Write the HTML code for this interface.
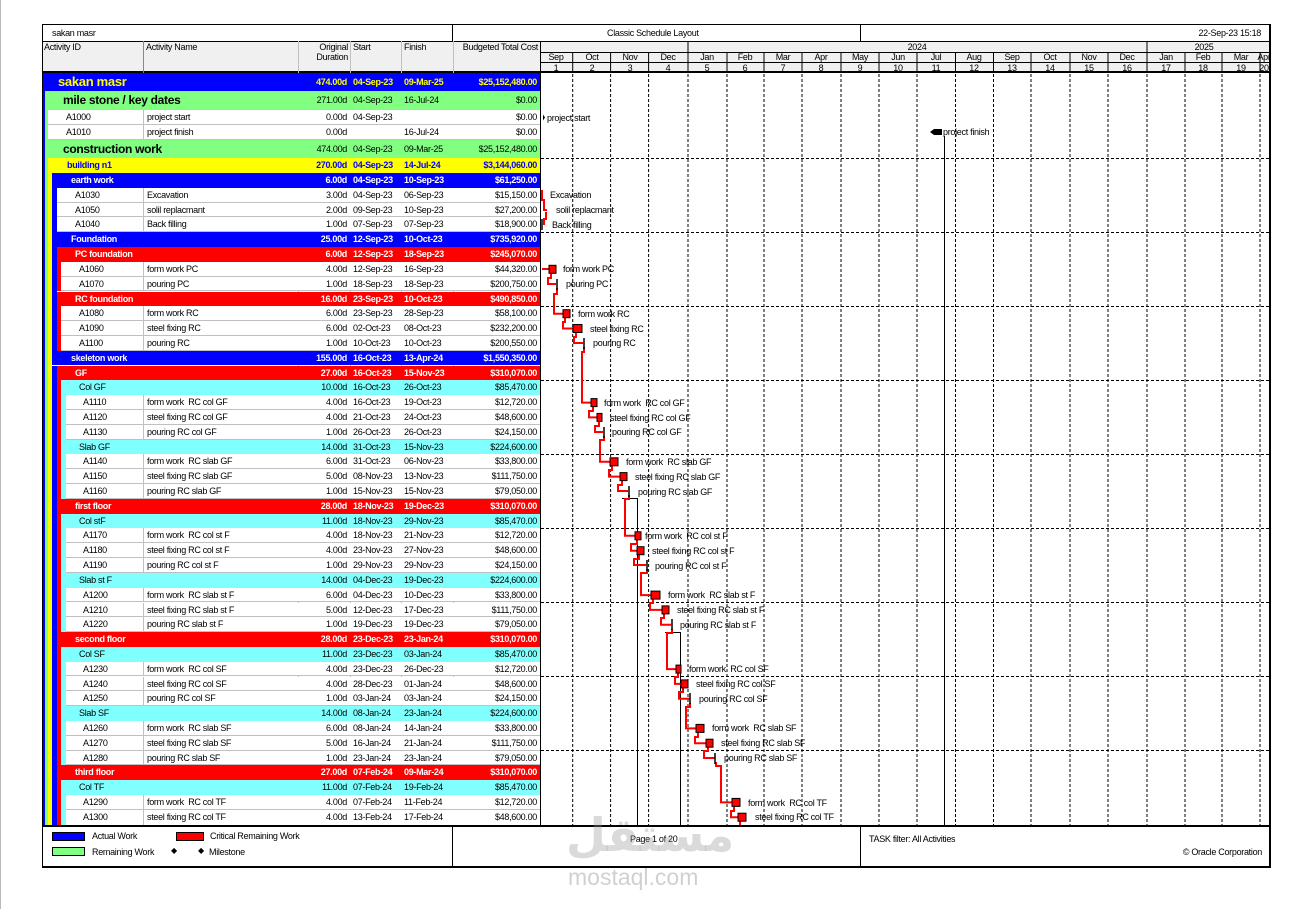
<!DOCTYPE html>
<html><head><meta charset="utf-8">
<style>
body{margin:0;width:1297px;height:909px;position:relative;background:#fff;font-family:"Liberation Sans",Arial,sans-serif;font-size:9px;letter-spacing:-.3px;overflow:hidden;color:#000}
.a{position:absolute;white-space:nowrap}
.r{position:absolute;left:0;width:540px;height:14.8px;line-height:14.8px}
.r>*{position:absolute;top:0;white-space:nowrap}
.r>i{right:0;height:100%;box-sizing:border-box}
.du{right:193px}.st{left:353px}.fi{left:404px}.co{right:3px}
.nm{left:143px;padding-left:3px;border-left:1px solid #c0c0c0;height:100%;box-sizing:border-box}
.w>i{background:#fff;border-bottom:1px solid #c0c0c0}
.L1>i{background:#0000ff}.L1{color:#ffff00;font-weight:bold}
.L2>i{background:#80ff80}
.L3>i{background:#ffff00}.L3{color:#0000ff;font-weight:bold}
.L4>i{background:#0000ff}.L4{color:#fff;font-weight:bold}
.L5>i{background:#ff0000}.L5{color:#fff;font-weight:bold}
.L6>i{background:#80ffff}
.sv{position:absolute;left:0;top:0}
.v{position:absolute;width:1px;background:#c0c0c0}
</style></head><body>
<!-- frame -->
<div class="a" style="left:0;top:0;width:1px;height:909px;background:#bbb"></div>
<div class="a" style="left:42px;top:24px;width:1226px;height:841px;border:1px solid #000;border-width:1px 2px 2px 1px"></div>
<div class="a" style="left:42px;top:24px;width:1228px;height:1px;background:#000"></div>
<div class="a" style="left:452px;top:24px;width:1px;height:17px;background:#000"></div>
<div class="a" style="left:860px;top:24px;width:1px;height:17px;background:#000"></div>
<div class="a" style="left:52px;top:28px">sakan masr</div>
<div class="a" style="left:607px;top:28px">Classic Schedule Layout</div>
<div class="a" style="right:36px;top:28px">22-Sep-23 15:18</div>
<!-- header -->
<div class="a" style="left:43px;top:41px;width:1226px;height:32px;background:#f0f0f0;border-top:1px solid #000;border-bottom:2px solid #000;box-sizing:border-box"></div>
<div class="a" style="left:44px;top:42px">Activity ID</div>
<div class="a" style="left:146px;top:42px">Activity Name</div>
<div class="a" style="right:949px;top:42px;text-align:right;line-height:10px">Original<br>Duration</div>
<div class="a" style="left:353px;top:42px">Start</div>
<div class="a" style="left:404px;top:42px">Finish</div>
<div class="a" style="right:759px;top:42px">Budgeted Total Cost</div>
<div class="v" style="left:143px;top:41px;height:32px;background:#888"></div>
<div class="v" style="left:298px;top:41px;height:785px"></div>
<div class="v" style="left:350px;top:41px;height:785px"></div>
<div class="v" style="left:401px;top:41px;height:785px"></div>
<div class="v" style="left:453px;top:41px;height:785px"></div>

<!-- rows -->
<div class="r L1" style="top:73px;height:18px;line-height:18px"><i style="left:43px"></i><span style="left:58px;font-size:13px">sakan masr</span><span class="du">474.00d</span><span class="st">04-Sep-23</span><span class="fi">09-Mar-25</span><span class="co">$25,152,480.00</span></div>
<div class="r L2" style="top:91px;height:19px;line-height:19px"><i style="left:45px"></i><span style="left:63px;font-size:12px;font-weight:bold">mile stone / key dates</span><span class="du">271.00d</span><span class="st">04-Sep-23</span><span class="fi">16-Jul-24</span><span class="co">$0.00</span></div>
<div class="r w" style="top:110px"><i style="left:48px"></i><span style="left:66px">A1000</span><span class="nm">project start</span><span class="du">0.00d</span><span class="st">04-Sep-23</span><span class="co">$0.00</span></div>
<div class="r w" style="top:125px"><i style="left:48px"></i><span style="left:66px">A1010</span><span class="nm">project finish</span><span class="du">0.00d</span><span class="fi">16-Jul-24</span><span class="co">$0.00</span></div>
<div class="r L2" style="top:140px;height:18px;line-height:18px"><i style="left:45px"></i><span style="left:63px;font-size:12px;font-weight:bold">construction work</span><span class="du">474.00d</span><span class="st">04-Sep-23</span><span class="fi">09-Mar-25</span><span class="co">$25,152,480.00</span></div>
<div class="r L3" style="top:158px"><i style="left:48px"></i><span style="left:67px">building n1</span><span class="du">270.00d</span><span class="st">04-Sep-23</span><span class="fi">14-Jul-24</span><span class="co">$3,144,060.00</span></div>

<div class="r L4" style="top:173px"><i style="left:52px"></i><span style="left:71px">earth work</span><span class="du">6.00d</span><span class="st">04-Sep-23</span><span class="fi">10-Sep-23</span><span class="co">$61,250.00</span></div>
<div class="r w" style="top:187.8px"><i style="left:57px"></i><span style="left:75px">A1030</span><span class="nm">Excavation</span><span class="du">3.00d</span><span class="st">04-Sep-23</span><span class="fi">06-Sep-23</span><span class="co">$15,150.00</span></div>
<div class="r w" style="top:202.6px"><i style="left:57px"></i><span style="left:75px">A1050</span><span class="nm">solil replacmant</span><span class="du">2.00d</span><span class="st">09-Sep-23</span><span class="fi">10-Sep-23</span><span class="co">$27,200.00</span></div>
<div class="r w" style="top:217.4px"><i style="left:57px"></i><span style="left:75px">A1040</span><span class="nm">Back filling</span><span class="du">1.00d</span><span class="st">07-Sep-23</span><span class="fi">07-Sep-23</span><span class="co">$18,900.00</span></div>
<div class="r L4" style="top:232.2px"><i style="left:52px"></i><span style="left:71px">Foundation</span><span class="du">25.00d</span><span class="st">12-Sep-23</span><span class="fi">10-Oct-23</span><span class="co">$735,920.00</span></div>
<div class="r L5" style="top:247.1px"><i style="left:57px"></i><span style="left:75px">PC foundation</span><span class="du">6.00d</span><span class="st">12-Sep-23</span><span class="fi">18-Sep-23</span><span class="co">$245,070.00</span></div>
<div class="r w" style="top:261.9px"><i style="left:61px"></i><span style="left:79px">A1060</span><span class="nm">form work PC</span><span class="du">4.00d</span><span class="st">12-Sep-23</span><span class="fi">16-Sep-23</span><span class="co">$44,320.00</span></div>
<div class="r w" style="top:276.7px"><i style="left:61px"></i><span style="left:79px">A1070</span><span class="nm">pouring PC</span><span class="du">1.00d</span><span class="st">18-Sep-23</span><span class="fi">18-Sep-23</span><span class="co">$200,750.00</span></div>
<div class="r L5" style="top:291.5px"><i style="left:57px"></i><span style="left:75px">RC foundation</span><span class="du">16.00d</span><span class="st">23-Sep-23</span><span class="fi">10-Oct-23</span><span class="co">$490,850.00</span></div>
<div class="r w" style="top:306.3px"><i style="left:61px"></i><span style="left:79px">A1080</span><span class="nm">form work RC</span><span class="du">6.00d</span><span class="st">23-Sep-23</span><span class="fi">28-Sep-23</span><span class="co">$58,100.00</span></div>
<div class="r w" style="top:321.1px"><i style="left:61px"></i><span style="left:79px">A1090</span><span class="nm">steel fixing RC</span><span class="du">6.00d</span><span class="st">02-Oct-23</span><span class="fi">08-Oct-23</span><span class="co">$232,200.00</span></div>
<div class="r w" style="top:335.9px"><i style="left:61px"></i><span style="left:79px">A1100</span><span class="nm">pouring RC</span><span class="du">1.00d</span><span class="st">10-Oct-23</span><span class="fi">10-Oct-23</span><span class="co">$200,550.00</span></div>
<div class="r L4" style="top:350.7px"><i style="left:52px"></i><span style="left:71px">skeleton work</span><span class="du">155.00d</span><span class="st">16-Oct-23</span><span class="fi">13-Apr-24</span><span class="co">$1,550,350.00</span></div>
<div class="r L5" style="top:365.5px"><i style="left:57px"></i><span style="left:75px">GF</span><span class="du">27.00d</span><span class="st">16-Oct-23</span><span class="fi">15-Nov-23</span><span class="co">$310,070.00</span></div>
<div class="r L6" style="top:380.3px"><i style="left:61px"></i><span style="left:79px">Col GF</span><span class="du">10.00d</span><span class="st">16-Oct-23</span><span class="fi">26-Oct-23</span><span class="co">$85,470.00</span></div>
<div class="r w" style="top:395.2px"><i style="left:66px"></i><span style="left:83px">A1110</span><span class="nm">form work&nbsp; RC col GF</span><span class="du">4.00d</span><span class="st">16-Oct-23</span><span class="fi">19-Oct-23</span><span class="co">$12,720.00</span></div>
<div class="r w" style="top:410px"><i style="left:66px"></i><span style="left:83px">A1120</span><span class="nm">steel fixing RC col GF</span><span class="du">4.00d</span><span class="st">21-Oct-23</span><span class="fi">24-Oct-23</span><span class="co">$48,600.00</span></div>
<div class="r w" style="top:424.8px"><i style="left:66px"></i><span style="left:83px">A1130</span><span class="nm">pouring RC col GF</span><span class="du">1.00d</span><span class="st">26-Oct-23</span><span class="fi">26-Oct-23</span><span class="co">$24,150.00</span></div>
<div class="r L6" style="top:439.6px"><i style="left:61px"></i><span style="left:79px">Slab GF</span><span class="du">14.00d</span><span class="st">31-Oct-23</span><span class="fi">15-Nov-23</span><span class="co">$224,600.00</span></div>
<div class="r w" style="top:454.4px"><i style="left:66px"></i><span style="left:83px">A1140</span><span class="nm">form work&nbsp; RC slab GF</span><span class="du">6.00d</span><span class="st">31-Oct-23</span><span class="fi">06-Nov-23</span><span class="co">$33,800.00</span></div>
<div class="r w" style="top:469.2px"><i style="left:66px"></i><span style="left:83px">A1150</span><span class="nm">steel fixing RC slab GF</span><span class="du">5.00d</span><span class="st">08-Nov-23</span><span class="fi">13-Nov-23</span><span class="co">$111,750.00</span></div>
<div class="r w" style="top:484px"><i style="left:66px"></i><span style="left:83px">A1160</span><span class="nm">pouring RC slab GF</span><span class="du">1.00d</span><span class="st">15-Nov-23</span><span class="fi">15-Nov-23</span><span class="co">$79,050.00</span></div>
<div class="r L5" style="top:498.8px"><i style="left:57px"></i><span style="left:75px">first floor</span><span class="du">28.00d</span><span class="st">18-Nov-23</span><span class="fi">19-Dec-23</span><span class="co">$310,070.00</span></div>
<div class="r L6" style="top:513.6px"><i style="left:61px"></i><span style="left:79px">Col stF</span><span class="du">11.00d</span><span class="st">18-Nov-23</span><span class="fi">29-Nov-23</span><span class="co">$85,470.00</span></div>
<div class="r w" style="top:528.4px"><i style="left:66px"></i><span style="left:83px">A1170</span><span class="nm">form work&nbsp; RC col st F</span><span class="du">4.00d</span><span class="st">18-Nov-23</span><span class="fi">21-Nov-23</span><span class="co">$12,720.00</span></div>
<div class="r w" style="top:543.3px"><i style="left:66px"></i><span style="left:83px">A1180</span><span class="nm">steel fixing RC col st F</span><span class="du">4.00d</span><span class="st">23-Nov-23</span><span class="fi">27-Nov-23</span><span class="co">$48,600.00</span></div>
<div class="r w" style="top:558.1px"><i style="left:66px"></i><span style="left:83px">A1190</span><span class="nm">pouring RC col st F</span><span class="du">1.00d</span><span class="st">29-Nov-23</span><span class="fi">29-Nov-23</span><span class="co">$24,150.00</span></div>
<div class="r L6" style="top:572.9px"><i style="left:61px"></i><span style="left:79px">Slab st F</span><span class="du">14.00d</span><span class="st">04-Dec-23</span><span class="fi">19-Dec-23</span><span class="co">$224,600.00</span></div>
<div class="r w" style="top:587.7px"><i style="left:66px"></i><span style="left:83px">A1200</span><span class="nm">form work&nbsp; RC slab st F</span><span class="du">6.00d</span><span class="st">04-Dec-23</span><span class="fi">10-Dec-23</span><span class="co">$33,800.00</span></div>
<div class="r w" style="top:602.5px"><i style="left:66px"></i><span style="left:83px">A1210</span><span class="nm">steel fixing RC slab st F</span><span class="du">5.00d</span><span class="st">12-Dec-23</span><span class="fi">17-Dec-23</span><span class="co">$111,750.00</span></div>
<div class="r w" style="top:617.3px"><i style="left:66px"></i><span style="left:83px">A1220</span><span class="nm">pouring RC slab st F</span><span class="du">1.00d</span><span class="st">19-Dec-23</span><span class="fi">19-Dec-23</span><span class="co">$79,050.00</span></div>
<div class="r L5" style="top:632.1px"><i style="left:57px"></i><span style="left:75px">second floor</span><span class="du">28.00d</span><span class="st">23-Dec-23</span><span class="fi">23-Jan-24</span><span class="co">$310,070.00</span></div>
<div class="r L6" style="top:646.9px"><i style="left:61px"></i><span style="left:79px">Col SF</span><span class="du">11.00d</span><span class="st">23-Dec-23</span><span class="fi">03-Jan-24</span><span class="co">$85,470.00</span></div>
<div class="r w" style="top:661.7px"><i style="left:66px"></i><span style="left:83px">A1230</span><span class="nm">form work&nbsp; RC col SF</span><span class="du">4.00d</span><span class="st">23-Dec-23</span><span class="fi">26-Dec-23</span><span class="co">$12,720.00</span></div>
<div class="r w" style="top:676.5px"><i style="left:66px"></i><span style="left:83px">A1240</span><span class="nm">steel fixing RC col SF</span><span class="du">4.00d</span><span class="st">28-Dec-23</span><span class="fi">01-Jan-24</span><span class="co">$48,600.00</span></div>
<div class="r w" style="top:691.4px"><i style="left:66px"></i><span style="left:83px">A1250</span><span class="nm">pouring RC col SF</span><span class="du">1.00d</span><span class="st">03-Jan-24</span><span class="fi">03-Jan-24</span><span class="co">$24,150.00</span></div>
<div class="r L6" style="top:706.2px"><i style="left:61px"></i><span style="left:79px">Slab SF</span><span class="du">14.00d</span><span class="st">08-Jan-24</span><span class="fi">23-Jan-24</span><span class="co">$224,600.00</span></div>
<div class="r w" style="top:721px"><i style="left:66px"></i><span style="left:83px">A1260</span><span class="nm">form work&nbsp; RC slab SF</span><span class="du">6.00d</span><span class="st">08-Jan-24</span><span class="fi">14-Jan-24</span><span class="co">$33,800.00</span></div>
<div class="r w" style="top:735.8px"><i style="left:66px"></i><span style="left:83px">A1270</span><span class="nm">steel fixing RC slab SF</span><span class="du">5.00d</span><span class="st">16-Jan-24</span><span class="fi">21-Jan-24</span><span class="co">$111,750.00</span></div>
<div class="r w" style="top:750.6px"><i style="left:66px"></i><span style="left:83px">A1280</span><span class="nm">pouring RC slab SF</span><span class="du">1.00d</span><span class="st">23-Jan-24</span><span class="fi">23-Jan-24</span><span class="co">$79,050.00</span></div>
<div class="r L5" style="top:765.4px"><i style="left:57px"></i><span style="left:75px">third floor</span><span class="du">27.00d</span><span class="st">07-Feb-24</span><span class="fi">09-Mar-24</span><span class="co">$310,070.00</span></div>
<div class="r L6" style="top:780.2px"><i style="left:61px"></i><span style="left:79px">Col TF</span><span class="du">11.00d</span><span class="st">07-Feb-24</span><span class="fi">19-Feb-24</span><span class="co">$85,470.00</span></div>
<div class="r w" style="top:795px"><i style="left:66px"></i><span style="left:83px">A1290</span><span class="nm">form work&nbsp; RC col TF</span><span class="du">4.00d</span><span class="st">07-Feb-24</span><span class="fi">11-Feb-24</span><span class="co">$12,720.00</span></div>
<div class="r w" style="top:809.8px;height:16.2px"><i style="left:66px"></i><span style="left:83px">A1300</span><span class="nm">steel fixing RC col TF</span><span class="du">4.00d</span><span class="st">13-Feb-24</span><span class="fi">17-Feb-24</span><span class="co">$48,600.00</span></div>

<!-- stripes -->
<div class="a" style="left:43px;top:91px;width:2px;height:735px;background:#0000ff"></div>
<div class="a" style="left:45px;top:110px;width:3px;height:30px;background:#80ff80"></div>
<div class="a" style="left:45px;top:158px;width:3px;height:668px;background:#80ff80"></div>
<div class="a" style="left:48px;top:173px;width:4px;height:653px;background:#ffff00"></div>
<div class="a" style="left:52px;top:187.8px;width:5px;height:44.4px;background:#0000ff"></div>
<div class="a" style="left:52px;top:247.1px;width:5px;height:103.6px;background:#0000ff"></div>
<div class="a" style="left:52px;top:365.5px;width:5px;height:460.5px;background:#0000ff"></div>
<div class="a" style="left:57px;top:261.9px;width:4px;height:29.6px;background:#f00"></div>
<div class="a" style="left:57px;top:306.3px;width:4px;height:44.4px;background:#f00"></div>
<div class="a" style="left:57px;top:380.3px;width:4px;height:118.5px;background:#f00"></div>
<div class="a" style="left:57px;top:513.6px;width:4px;height:118.5px;background:#f00"></div>
<div class="a" style="left:57px;top:646.9px;width:4px;height:118.5px;background:#f00"></div>
<div class="a" style="left:57px;top:780.2px;width:4px;height:45.8px;background:#f00"></div>
<div class="a" style="left:61px;top:395.2px;width:5px;height:44.4px;background:#80ffff"></div>
<div class="a" style="left:61px;top:454.4px;width:5px;height:44.4px;background:#80ffff"></div>
<div class="a" style="left:61px;top:528.4px;width:5px;height:44.5px;background:#80ffff"></div>
<div class="a" style="left:61px;top:587.7px;width:5px;height:44.4px;background:#80ffff"></div>
<div class="a" style="left:61px;top:661.7px;width:5px;height:44.5px;background:#80ffff"></div>
<div class="a" style="left:61px;top:721px;width:5px;height:44.4px;background:#80ffff"></div>
<div class="a" style="left:61px;top:795px;width:5px;height:31px;background:#80ffff"></div>

<!-- gantt -->
<svg class="sv" width="1297" height="909" viewBox="0 0 1297 909" font-family="Liberation Sans, Arial, sans-serif" font-size="9" letter-spacing="-0.3">
<line x1="540.5" y1="41" x2="540.5" y2="826" stroke="#000"/>
<g stroke="#000" stroke-width="1">
<line x1="540" y1="52.5" x2="1269" y2="52.5"/>
<line x1="540" y1="62.5" x2="1269" y2="62.5"/>
<line x1="688" y1="41" x2="688" y2="73"/><line x1="1147" y1="41" x2="1147" y2="73"/>
<line x1="572.7" y1="52" x2="572.7" y2="73"/><line x1="610.6" y1="52" x2="610.6" y2="73"/><line x1="648.6" y1="52" x2="648.6" y2="73"/><line x1="727" y1="52" x2="727" y2="73"/><line x1="764" y1="52" x2="764" y2="73"/><line x1="802" y1="52" x2="802" y2="73"/><line x1="841" y1="52" x2="841" y2="73"/><line x1="879" y1="52" x2="879" y2="73"/><line x1="917" y1="52" x2="917" y2="73"/><line x1="955.5" y1="52" x2="955.5" y2="73"/><line x1="993.5" y1="52" x2="993.5" y2="73"/><line x1="1031" y1="52" x2="1031" y2="73"/><line x1="1070" y1="52" x2="1070" y2="73"/><line x1="1108" y1="52" x2="1108" y2="73"/><line x1="1185" y1="52" x2="1185" y2="73"/><line x1="1222" y1="52" x2="1222" y2="73"/><line x1="1260" y1="52" x2="1260" y2="73"/>
</g>
<g text-anchor="middle">
<text x="917" y="50">2024</text><text x="1204" y="50">2025</text>
<text x="556" y="60">Sep</text><text x="592" y="60">Oct</text><text x="630" y="60">Nov</text><text x="668" y="60">Dec</text><text x="707" y="60">Jan</text><text x="745" y="60">Feb</text><text x="783" y="60">Mar</text><text x="821" y="60">Apr</text><text x="860" y="60">May</text><text x="898" y="60">Jun</text><text x="936" y="60">Jul</text><text x="974" y="60">Aug</text><text x="1012" y="60">Sep</text><text x="1050" y="60">Oct</text><text x="1089" y="60">Nov</text><text x="1127" y="60">Dec</text><text x="1166" y="60">Jan</text><text x="1203" y="60">Feb</text><text x="1241" y="60">Mar</text><text x="1264" y="60">Apr</text>
<text x="556" y="71">1</text><text x="592" y="71">2</text><text x="630" y="71">3</text><text x="668" y="71">4</text><text x="707" y="71">5</text><text x="745" y="71">6</text><text x="783" y="71">7</text><text x="821" y="71">8</text><text x="860" y="71">9</text><text x="898" y="71">10</text><text x="936" y="71">11</text><text x="974" y="71">12</text><text x="1012" y="71">13</text><text x="1050" y="71">14</text><text x="1089" y="71">15</text><text x="1127" y="71">16</text><text x="1166" y="71">17</text><text x="1203" y="71">18</text><text x="1241" y="71">19</text><text x="1264" y="71">20</text>
</g>
<g stroke="#000" stroke-dasharray="3,2">
<line x1="572.7" y1="74" x2="572.7" y2="826"/><line x1="610.6" y1="74" x2="610.6" y2="826"/><line x1="648.6" y1="74" x2="648.6" y2="826"/><line x1="688" y1="74" x2="688" y2="826"/><line x1="727" y1="74" x2="727" y2="826"/><line x1="764" y1="74" x2="764" y2="826"/><line x1="802" y1="74" x2="802" y2="826"/><line x1="841" y1="74" x2="841" y2="826"/><line x1="879" y1="74" x2="879" y2="826"/><line x1="917" y1="74" x2="917" y2="826"/><line x1="955.5" y1="74" x2="955.5" y2="826"/><line x1="993.5" y1="74" x2="993.5" y2="826"/><line x1="1031" y1="74" x2="1031" y2="826"/><line x1="1070" y1="74" x2="1070" y2="826"/><line x1="1108" y1="74" x2="1108" y2="826"/><line x1="1147" y1="74" x2="1147" y2="826"/><line x1="1185" y1="74" x2="1185" y2="826"/><line x1="1222" y1="74" x2="1222" y2="826"/><line x1="1260" y1="74" x2="1260" y2="826"/>
<line x1="541" y1="158.5" x2="1269" y2="158.5"/><line x1="541" y1="232.5" x2="1269" y2="232.5"/><line x1="541" y1="306.5" x2="1269" y2="306.5"/><line x1="541" y1="380.5" x2="1269" y2="380.5"/><line x1="541" y1="454.5" x2="1269" y2="454.5"/><line x1="541" y1="528.5" x2="1269" y2="528.5"/><line x1="541" y1="602.5" x2="1269" y2="602.5"/><line x1="541" y1="676.5" x2="1269" y2="676.5"/><line x1="541" y1="750.5" x2="1269" y2="750.5"/>
</g>
<!-- black relation lines -->
<g stroke="#000" fill="none" stroke-width="1">
<path d="M944.5,136 V826"/>
<path d="M622,498.5 H637.5 V826"/>
<path d="M665,632.5 H680.5 V826"/>
</g>
<!-- milestones -->
<path d="M543,114.5 l2,3 l-2,3 z" fill="#000"/>
<path d="M930,132 l4,-3 h8 v6 h-8 z" fill="#000"/>
<!-- connectors -->
<g stroke="#f00" stroke-width="2" fill="none">
<path d="M542,190 V200 H544 V210 H547"/>
<path d="M546,212 V219 H544 V224 H545"/>
<path d="M542,269 H549"/>
<path d="M551,273 V278 H548 V284 H556"/>
<path d="M557,288 V294 H554 V313.7 H563"/>
<path d="M565,318 V322 H563 V328.5 H573"/>
<path d="M576,333 V337 H574 V343 H583"/>
<path d="M584,347 V352 H582 V402.6 H591"/>
<path d="M593,407 V411 H589 V417.4 H597"/>
<path d="M599,422 V426 H595 V432 H603"/>
<path d="M604,436 V440 H600 V461.8 H610"/>
<path d="M612,466 V470 H609 V476.6 H620"/>
<path d="M622,481 V485 H618 V491 H628"/>
<path d="M629,495 V499 H625 V535.8 H635"/>
<path d="M637,540 V544 H631 V550.7 H637"/>
<path d="M639,555 V559 H634 V565 H646"/>
<path d="M647,569 V573 H641 V595.1 H651"/>
<path d="M653,599 V603 H650 V609.9 H662"/>
<path d="M664,614 V618 H661 V624.7 H671"/>
<path d="M672,629 V633 H667 V669.1 H676"/>
<path d="M678,673 V677 H675 V683.9 H681"/>
<path d="M683,688 V692 H679 V698.8 H690"/>
<path d="M690,703 V707 H686 V728.4 H696"/>
<path d="M698,733 V737 H695 V743.2 H706"/>
<path d="M708,747 V751 H704 V758 H715"/>
<path d="M716,762 V766 H721 V802.4 H732"/>
<path d="M734,807 V811 H731 V817.2 H738"/>
<path d="M740,821 V826"/>
</g>
<!-- bars -->
<g fill="#f00" stroke="#000" stroke-width="1">
<rect x="549" y="265.3" width="7" height="8"/>
<rect x="563" y="309.7" width="7" height="8"/>
<rect x="573" y="324.5" width="9" height="8"/>
<rect x="591" y="398.6" width="6" height="8"/>
<rect x="597" y="413.4" width="5" height="8"/>
<rect x="610" y="457.8" width="8" height="8"/>
<rect x="620" y="472.6" width="7" height="8"/>
<rect x="635" y="531.8" width="6" height="8"/>
<rect x="637" y="546.7" width="7" height="8"/>
<rect x="651" y="591.1" width="9" height="8"/>
<rect x="662" y="605.9" width="7" height="8"/>
<rect x="676" y="665.1" width="5" height="8"/>
<rect x="681" y="679.9" width="7" height="8"/>
<rect x="696" y="724.4" width="8" height="8"/>
<rect x="706" y="739.2" width="7" height="8"/>
<rect x="732" y="798.4" width="8" height="8"/>
<rect x="738" y="813.2" width="8" height="8"/>
</g>
<g stroke="#000" stroke-width="1.5">
<line x1="542" y1="219" x2="542" y2="230"/>
<line x1="557" y1="279" x2="557" y2="290"/>
<line x1="584" y1="338" x2="584" y2="349"/>
<line x1="604" y1="427" x2="604" y2="438"/>
<line x1="629" y1="486" x2="629" y2="497"/>
<line x1="647" y1="560" x2="647" y2="571"/>
<line x1="672" y1="619" x2="672" y2="630"/>
<line x1="690" y1="693" x2="690" y2="704"/>
<line x1="715" y1="753" x2="715" y2="764"/>
</g>
<g fill="#000">
<text x="547" y="121">project start</text>
<text x="943" y="135">project finish</text>
<text x="550" y="198">Excavation</text>
<text x="556" y="213">solil replacmant</text>
<text x="552" y="228">Back filling</text>
<text x="563" y="272">form work PC</text>
<text x="566" y="287">pouring PC</text>
<text x="578" y="317">form work RC</text>
<text x="590" y="332">steel fixing RC</text>
<text x="593" y="346">pouring RC</text>
<text x="604" y="406">form work&#160; RC col GF</text>
<text x="610" y="421">steel fixing RC col GF</text>
<text x="612" y="435">pouring RC col GF</text>
<text x="626" y="465">form work&#160; RC slab GF</text>
<text x="635" y="480">steel fixing RC slab GF</text>
<text x="638" y="495">pouring RC slab GF</text>
<text x="645" y="539">form work&#160; RC col st F</text>
<text x="652" y="554">steel fixing RC col st F</text>
<text x="655" y="569">pouring RC col st F</text>
<text x="668" y="598">form work&#160; RC slab st F</text>
<text x="677" y="613">steel fixing RC slab st F</text>
<text x="680" y="628">pouring RC slab st F</text>
<text x="689" y="672">form work&#160; RC col SF</text>
<text x="696" y="687">steel fixing RC col SF</text>
<text x="699" y="702">pouring RC col SF</text>
<text x="712" y="731">form work&#160; RC slab SF</text>
<text x="721" y="746">steel fixing RC slab SF</text>
<text x="724" y="761">pouring RC slab SF</text>
<text x="748" y="806">form work&#160; RC col TF</text>
<text x="755" y="820">steel fixing RC col TF</text>
</g>
</svg>

<!-- footer -->
<div class="a" style="left:43px;top:825px;width:1226px;height:2px;background:#000"></div>
<div class="a" style="left:452px;top:826px;width:1px;height:40px;background:#000"></div>
<div class="a" style="left:860px;top:826px;width:1px;height:40px;background:#000"></div>
<div class="a" style="left:52px;top:832px;width:31px;height:7px;background:#0000ff;border:1px solid #000"></div>
<div class="a" style="left:92px;top:831px">Actual Work</div>
<div class="a" style="left:176px;top:832px;width:26px;height:7px;background:#f00;border:1px solid #000"></div>
<div class="a" style="left:210px;top:831px">Critical Remaining Work</div>
<div class="a" style="left:52px;top:847px;width:31px;height:7px;background:#80ff80;border:1px solid #000"></div>
<div class="a" style="left:92px;top:847px">Remaining Work</div>
<div class="a" style="left:171px;top:846px;font-size:8px">&#9670;</div>
<div class="a" style="left:198px;top:846px;font-size:8px">&#9670;</div>
<div class="a" style="left:209px;top:847px">Milestone</div>
<div class="a" style="left:630px;top:834px">Page 1 of 20</div>
<div class="a" style="left:869px;top:834px">TASK filter: All Activities</div>
<div class="a" style="right:35px;top:847px">© Oracle Corporation</div>
<!-- watermark -->
<div class="a" style="left:566px;top:808px;font-family:'DejaVu Sans',sans-serif;font-size:46px;font-weight:bold;color:rgba(150,150,150,.35);letter-spacing:0">مستقل</div>
<div class="a" style="left:568px;top:864px;font-size:23px;color:rgba(150,150,150,.45);letter-spacing:0">mostaql.com</div>
</body></html>
